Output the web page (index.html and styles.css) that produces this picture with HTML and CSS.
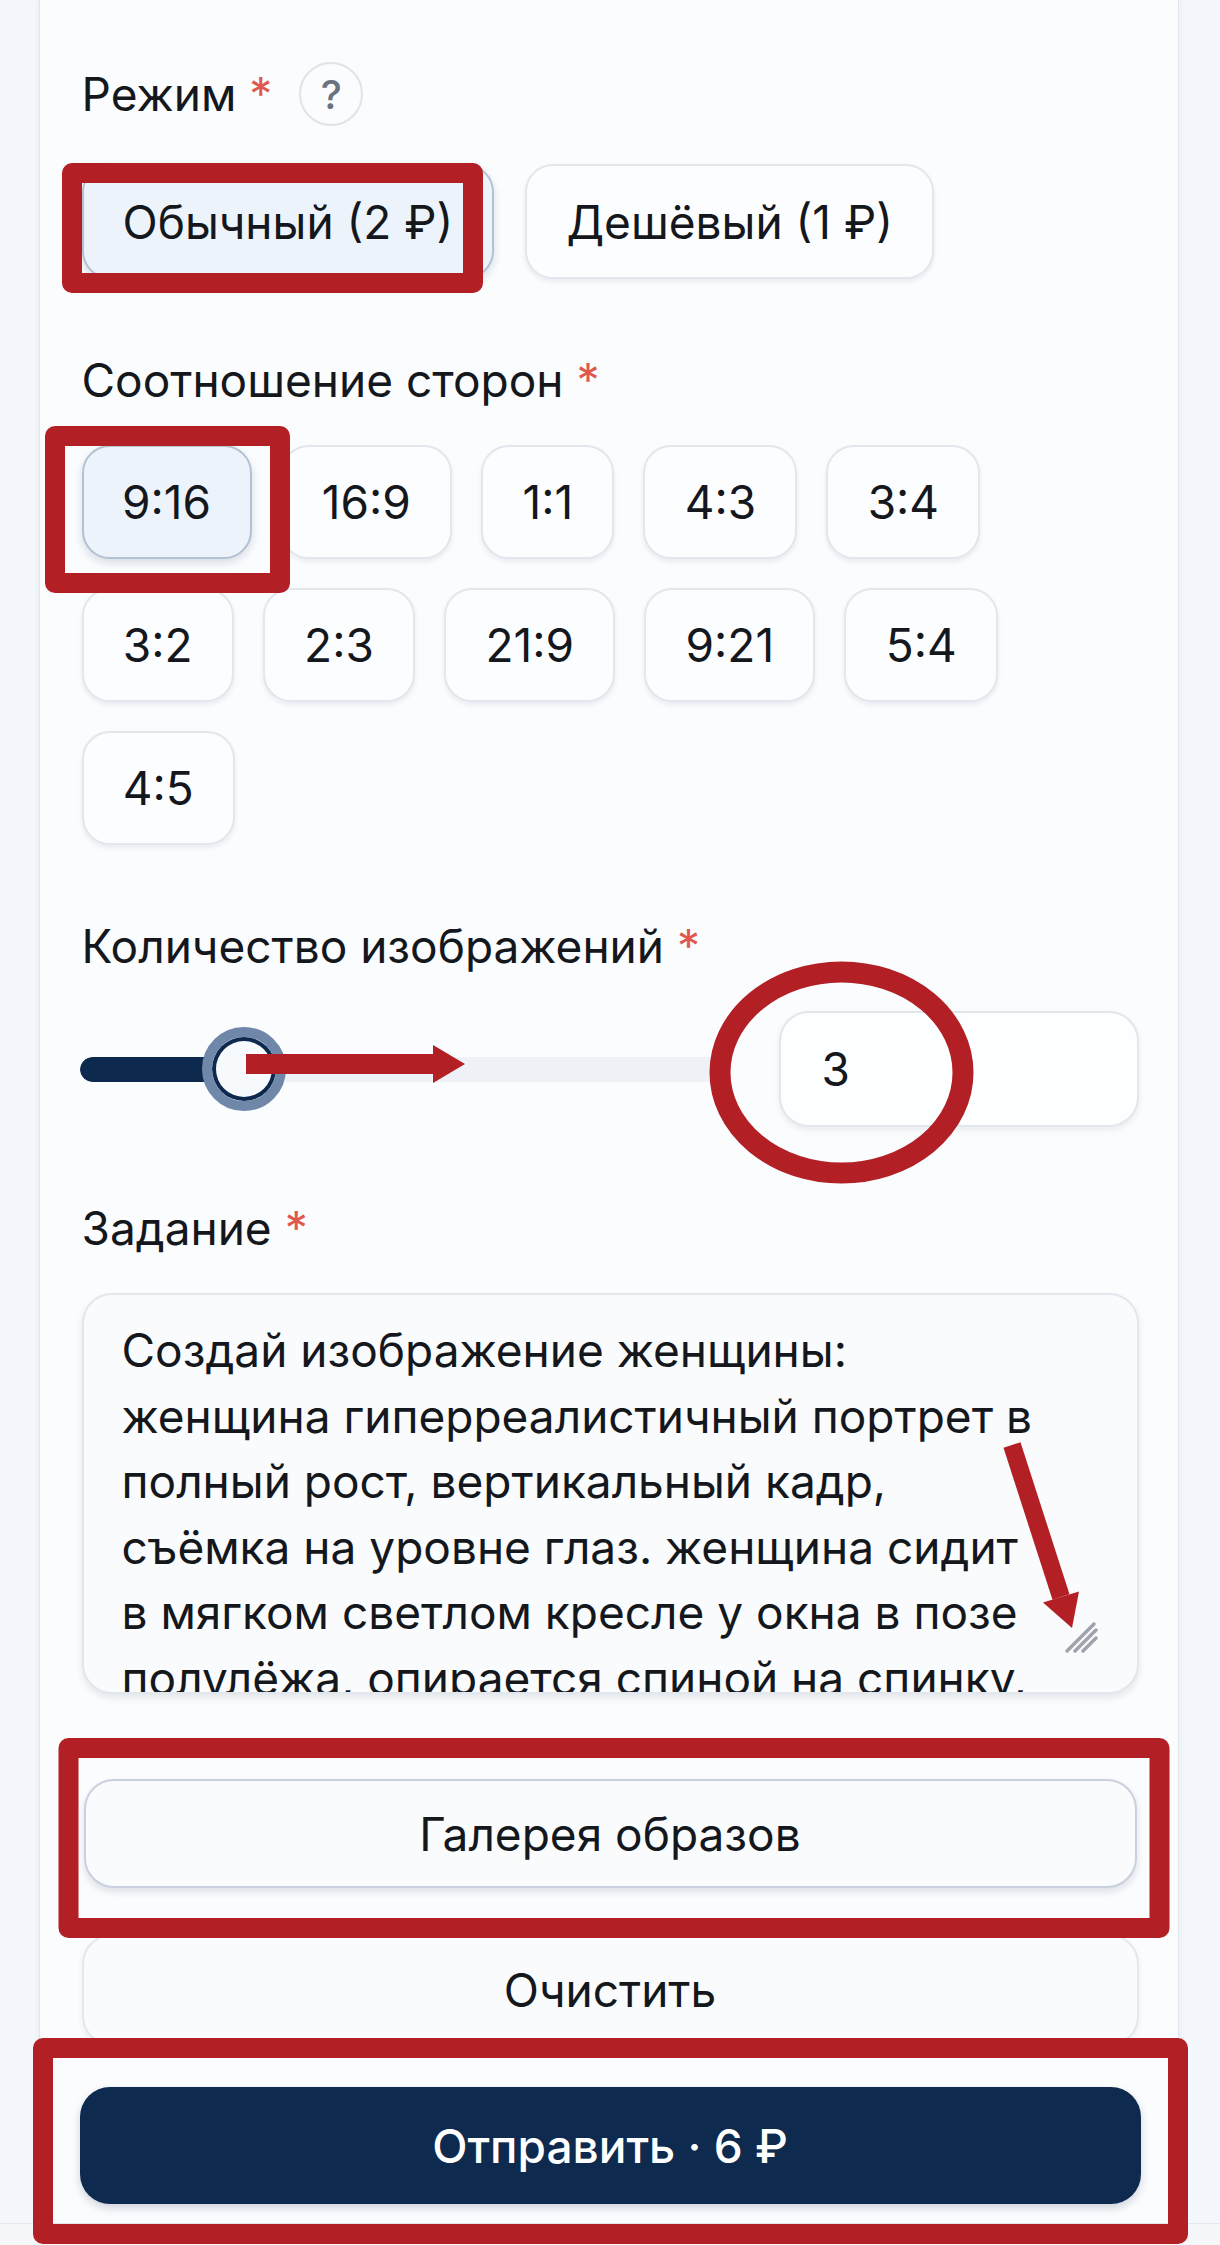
FILE: index.html
```html
<!DOCTYPE html>
<html lang="ru">
<head>
<meta charset="utf-8">
<title>Генерация</title>
<link rel="stylesheet" href="styles.css">
</head>
<body>
<div class="card">
  <div class="field">
    <div class="label label-help">Режим<span class="req">*</span><span class="help">?</span></div>
    <div class="opts">
      <div class="opt sel">Обычный (2 ₽)</div>
      <div class="opt">Дешёвый (1 ₽)</div>
    </div>
  </div>

  <div class="field">
    <div class="label">Соотношение сторон<span class="req">*</span></div>
    <div class="grid">
      <div class="opts">
        <div class="opt sel">9:16</div>
        <div class="opt">16:9</div>
        <div class="opt">1:1</div>
        <div class="opt">4:3</div>
        <div class="opt">3:4</div>
      </div>
      <div class="opts">
        <div class="opt">3:2</div>
        <div class="opt">2:3</div>
        <div class="opt">21:9</div>
        <div class="opt">9:21</div>
        <div class="opt">5:4</div>
      </div>
      <div class="opts">
        <div class="opt">4:5</div>
      </div>
    </div>
  </div>

  <div class="field">
    <div class="label">Количество изображений<span class="req">*</span></div>
    <div class="slider-row">
      <div class="slider">
        <div class="track"><div class="fill" style="width: 164px"></div></div>
        <div class="thumb" style="left: 122px"></div>
      </div>
      <div class="num">3</div>
    </div>
  </div>

  <div class="field">
    <div class="label">Задание<span class="req">*</span></div>
    <div class="textarea">
      <div class="ta-text">Создай изображение женщины:<br>женщина гиперреалистичный портрет в<br>полный рост, вертикальный кадр,<br>съёмка на уровне глаз. женщина сидит<br>в мягком светлом кресле у окна в позе<br>полулёжа, опирается спиной на спинку,</div>
      <svg class="grip" width="34" height="34" viewBox="0 0 34 34">
        <line x1="3" y1="31" x2="30" y2="4" />
        <line x1="11" y1="31" x2="32" y2="10" />
        <line x1="19" y1="31" x2="32" y2="18" />
      </svg>
    </div>
  </div>

  <div class="actions">
    <div class="btn btn-gallery">Галерея образов</div>
    <div class="btn btn-clear">Очистить</div>
    <div class="btn btn-submit">Отправить · 6 ₽</div>
  </div>
</div>
<div class="bottom-bar"></div>

<svg class="marks" width="1220" height="2245" viewBox="0 0 1220 2245">
  <g fill="none" stroke="#b21f24" stroke-width="20" stroke-linejoin="round">
    <rect x="72" y="173" width="401" height="110" />
    <rect x="55" y="436" width="225" height="147" />
    <rect x="68.5" y="1748" width="1091" height="180" />
    <rect x="43" y="2048" width="1135" height="186" />
  </g>
  <ellipse cx="841.5" cy="1072.5" rx="121.5" ry="100.5" fill="none" stroke="#b21f24" stroke-width="21" />
  <g fill="#b21f24">
    <rect x="246" y="1054" width="188" height="20" />
    <polygon points="433,1045 465,1064 433,1083" />
    <polygon points="1003.5,1447.8 1020.5,1442.2 1069.5,1594.2 1052.5,1599.8" />
    <polygon points="1079,1591.4 1072,1628 1043,1602.6" />
  </g>
</svg>
</body>
</html>
```

FILE: styles.css
```css
* {
  box-sizing: border-box;
}

html,
body {
  margin: 0;
  padding: 0;
}

body {
  position: relative;
  width: 1220px;
  height: 2245px;
  overflow: hidden;
  background: #f4f7fb;
  font-family: Inter, "Noto Sans", "DejaVu Sans", sans-serif;
  color: #14171c;
}

.card {
  margin: 0 41px 0 39px;
  background: #fafcfe;
  border-left: 1.5px solid #e1e6ed;
  border-right: 1.5px solid #e1e6ed;
  box-shadow: 0 0 8px rgba(30, 50, 80, 0.06);
  padding: 62px 39.5px 19px 41.5px;
}

.field + .field {
  margin-top: 75px;
}

.label {
  display: flex;
  align-items: center;
  font-size: 46px;
  line-height: 53px;
  margin-bottom: 38px;
  white-space: nowrap;
}

.label-help {
  height: 64px;
}

.req {
  color: #e0584d;
  margin-left: 13px;
}

.help {
  display: flex;
  align-items: center;
  justify-content: center;
  width: 64px;
  height: 64px;
  margin-left: 27px;
  border: 2px solid #dfe4ea;
  border-radius: 50%;
  color: #6b7280;
  font-size: 40px;
  font-weight: 500;
}

.grid {
  display: flex;
  flex-direction: column;
  gap: 29px;
}

.opts {
  display: flex;
  gap: 29px;
}

.field:first-child .opts {
  gap: 31px;
}

.opt {
  display: flex;
  align-items: center;
  justify-content: center;
  height: 114px;
  padding: 0 39.3px;
  border: 2px solid #e2e7ee;
  border-radius: 28px;
  background: #fcfdff;
  font-size: 46px;
  box-shadow: 0 3px 5px rgba(15, 30, 60, 0.07);
  white-space: nowrap;
}

.grid .opt.sel {
  padding: 0 38.5px;
}

.field:first-child .opt {
  height: 115px;
  padding: 0 39px;
}

.opt.sel {
  background: #edf3fb;
  border-color: #b3c1d4;
  box-shadow: 0 4px 8px rgba(15, 30, 60, 0.14);
}

.slider-row {
  display: flex;
  align-items: center;
  gap: 50px;
}

.slider {
  position: relative;
  flex: 1;
  height: 116px;
  display: flex;
  align-items: center;
  margin-left: -2px;
}

.track {
  width: 100%;
  height: 25px;
  border-radius: 13px;
  background: #eef2f7;
  overflow: hidden;
}

.fill {
  height: 100%;
  background: #0d2a4e;
  border-radius: 13px 0 0 13px;
}

.thumb {
  position: absolute;
  top: 16px;
  width: 84px;
  height: 84px;
  border-radius: 50%;
  background: #f7fafd;
  border: 10px solid #6f87a8;
  box-shadow: inset 0 0 0 4px #0d2a4e;
}

.num {
  display: flex;
  align-items: center;
  width: 360px;
  height: 116px;
  padding-left: 41px;
  border: 2px solid #e2e7ee;
  border-radius: 30px;
  background: #fdfeff;
  box-shadow: 0 3px 6px rgba(15, 30, 60, 0.07);
  font-size: 46px;
}

.textarea {
  position: relative;
  height: 401px;
  overflow: hidden;
  padding: 23px 38px 0 38px;
  border: 2px solid #e2e7ee;
  border-radius: 30px;
  background: #f9fbfd;
  box-shadow: 0 4px 7px rgba(15, 30, 60, 0.09);
}

.ta-text {
  font-size: 46px;
  line-height: 65.5px;
  white-space: nowrap;
}

.grip {
  position: absolute;
  right: 39px;
  bottom: 38px;
}

.grip line {
  stroke: #9fa4ab;
  stroke-width: 3.5;
  stroke-linecap: round;
}

.actions {
  display: flex;
  flex-direction: column;
  margin-top: 85px;
}

.btn {
  display: flex;
  align-items: center;
  justify-content: center;
  font-size: 46px;
  border-radius: 30px;
}

.btn-gallery {
  height: 109px;
  margin: 0 2px;
  border: 2px solid #c8d1dd;
  background: #f9fbfd;
  box-shadow: 0 4px 7px rgba(15, 30, 60, 0.12);
}

.btn-clear {
  height: 112px;
  margin-top: 46px;
  border: 2px solid #e3e8ee;
  background: #f9fbfd;
  box-shadow: 0 3px 6px rgba(15, 30, 60, 0.06);
}

.btn-submit {
  height: 117px;
  margin: 41px -2px 0;
  background: #0e2a4f;
  color: #ffffff;
  font-weight: 500;
  box-shadow: 0 4px 8px rgba(15, 30, 60, 0.18);
}

.bottom-bar {
  height: 22px;
  border-top: 1.5px solid #e3e6ea;
  background: #f6f7f9;
}

.marks {
  position: absolute;
  top: 0;
  left: 0;
  pointer-events: none;
}
```
